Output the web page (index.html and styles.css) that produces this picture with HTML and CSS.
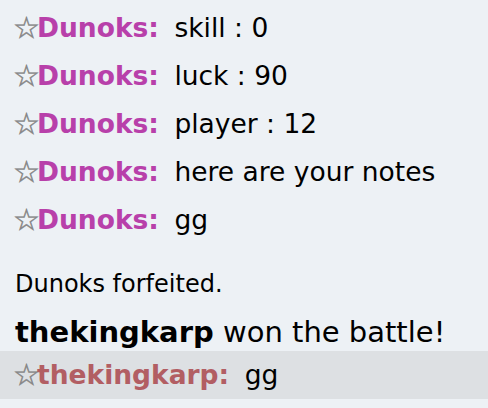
FILE: index.html
```html
<!DOCTYPE html>
<html lang="en">
<head>
    <meta charset="UTF-8">
    <title>Battle chat</title>
    <link rel="stylesheet" href="styles.css">
</head>
<body>
    <div class="chat-log">
        <div class="chat"><span class="star">&#9734;</span><strong class="opp">Dunoks:</strong> <em>skill : 0</em></div>
        <div class="chat"><span class="star">&#9734;</span><strong class="opp">Dunoks:</strong> <em>luck : 90</em></div>
        <div class="chat"><span class="star">&#9734;</span><strong class="opp">Dunoks:</strong> <em>player : 12</em></div>
        <div class="chat"><span class="star">&#9734;</span><strong class="opp">Dunoks:</strong> <em>here are your notes</em></div>
        <div class="chat"><span class="star">&#9734;</span><strong class="opp">Dunoks:</strong> <em>gg</em></div>
        <div class="notice">Dunoks forfeited.</div>
        <div class="win"><strong>thekingkarp</strong> won the battle!</div>
        <div class="chat mine"><span class="star">&#9734;</span><strong class="me">thekingkarp:</strong> <em>gg</em></div>
    </div>
</body>
</html>
```

FILE: styles.css
```css
body {
    margin: 0;
    background: #edf1f5;
    font-family: "DejaVu Sans", Verdana, sans-serif;
    color: #000;
}

.chat-log {
    padding: 4px 0 0 0;
}

.chat {
    font-size: 26.5px;
    height: 48px;
    line-height: 48px;
    padding-left: 13px;
    white-space: nowrap;
}

.chat em {
    font-style: normal;
    margin-left: 7px;
}

.star {
    display: inline-block;
    width: 24px;
    color: #858585;
    -webkit-text-stroke: 0.5px #858585;
    font-size: 30px;
    line-height: 30px;
    vertical-align: -1px;
}

.opp {
    color: #b840aa;
}

.me {
    color: #b25e63;
}

.notice {
    font-size: 24px;
    padding: 23px 0 0 15px;
    height: 34px;
    line-height: 34px;
}

.win {
    font-size: 29px;
    padding: 12px 0 0 15px;
    height: 38px;
    line-height: 38px;
}

.mine {
    background: #dde0e3;
}
```
